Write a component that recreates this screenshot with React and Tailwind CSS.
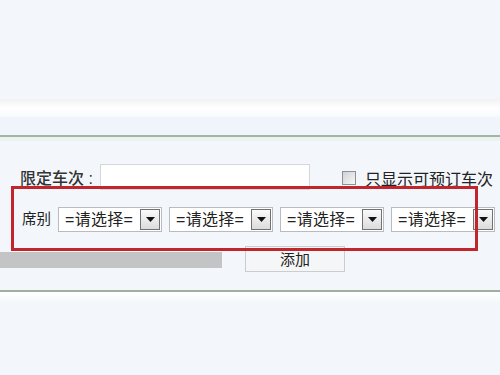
import React from 'react';

const font = { fontFamily: '"Liberation Sans", "Noto Sans CJK SC", sans-serif' };

// one of the "=请选择=" dropdowns
const SeatSelect = () => (
  <div className="flex h-[25px] w-[104px] shrink-0 items-center border border-[#b9bcbf] bg-white pl-[6px]">
    <span className="flex-1 text-[16px] leading-none tracking-[0.3px] text-[#222]">=请选择=</span>
    <span className="mr-[1px] flex h-[21px] w-[20px] items-center justify-center border border-[#6f7275] bg-gradient-to-b from-[#fafafa] to-[#dcdcdc]">
      <svg width="9" height="5" viewBox="0 0 9 5">
        <path d="M0 0h9L4.5 5z" fill="#111" />
      </svg>
    </span>
  </div>
);

export default function App() {
  return (
    <div className="relative h-[375px] w-[500px] overflow-hidden bg-[#f3f7fb] text-[#222]" style={font}>
      <div className="h-[99px]" />
      <div className="h-[18px] bg-gradient-to-b from-[#f0f2f4] via-white to-[#f7fafd]" />
      <div className="h-[18px] bg-[#eff5fb]" />
      <div className="h-[2px] bg-[#a4b4a6]" />
      <div className="h-[4px] bg-[#e9f4ee]" />

      {/* 限定车次 */}
      <div className="mt-[23px] flex h-[26px] items-center">
        <span className="ml-[20px] mt-[4px] w-[80px] text-[16px] font-medium leading-none text-[#333]">限定车次 :</span>
        <div className="h-[26px] w-[210px] border border-[#d4d7da] bg-white" />
        <span className="ml-[32px] mt-[2px] h-[14px] w-[14px] border border-[#8d9195] bg-gradient-to-br from-[#cfd2d5] to-[#f7f7f7]" />
        <span className="ml-[9px] mt-[6px] text-[16px] leading-none">只显示可预订车次</span>
      </div>

      {/* 席别 */}
      <div className="mt-[17px] flex h-[25px] items-center">
        <span className="ml-[22px] w-[36px] text-[14.5px] leading-none">席别</span>
        <div className="flex gap-[7px]">
          <SeatSelect />
          <SeatSelect />
          <SeatSelect />
          <SeatSelect />
        </div>
      </div>

      {/* 添加 */}
      <div className="mt-[14px] flex h-[26px] items-center">
        <div className="mt-[2px] h-[16px] w-[222px] bg-[#c3c4c6]" />
        <button className="ml-[23px] flex h-[26px] w-[100px] items-center justify-center border border-[#cacdd0] bg-[#f5f6f7] text-[15px] leading-none">
          添加
        </button>
      </div>

      <div className="mt-[18px] h-[2px] bg-[#9fae9f]" />
      <div className="h-[10px] bg-gradient-to-b from-white to-[#f5f8fb]" />

      {/* annotation box */}
      <div className="absolute left-[11px] top-[186px] h-[65px] w-[467px] border-[3px] border-[#c0262c]" />
    </div>
  );
}
